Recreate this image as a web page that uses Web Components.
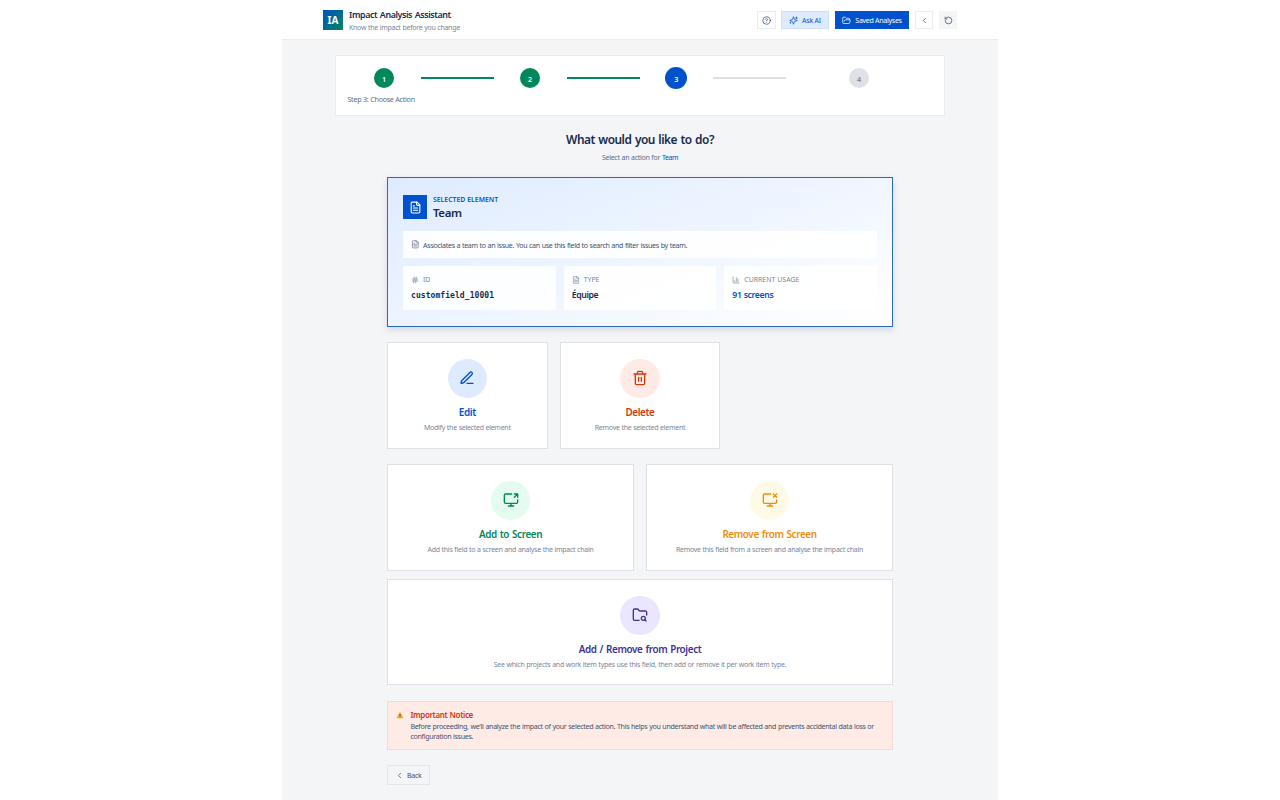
<!DOCTYPE html>
<html lang="en">
<head>
    <meta charset="UTF-8">
    <meta name="viewport" content="width=device-width, initial-scale=1.0">
    <title>Impact Analysis Assistant</title>
    <style>
        body {
            margin: 0;
            background: #fff;
            color: #172b4d;
            font-family: "Noto Sans", "Open Sans", sans-serif;
            font-size: 7px;
            line-height: 10px;
            letter-spacing: -0.27px;
            word-spacing: 0.25px;
        }

        .team { color: #0052cc; letter-spacing: -0.4px; }
    </style>
</head>
<body>
    <impact-app>
        <app-header slot="header"></app-header>
        <step-progress current="3" total="4" label="Step 3: Choose Action"></step-progress>
        <page-title heading="What would you like to do?">Select an action for <span class="team">Team</span></page-title>
        <selected-element name="Team"></selected-element>

        <action-row columns="3">
            <action-card icon="pen" heading="Edit" color="#0052cc" tint="#deebff">Modify the selected element</action-card>
            <action-card icon="trash" heading="Delete" color="#d4380d" tint="#ffebe6">Remove the selected element</action-card>
        </action-row>
        <action-row columns="2">
            <action-card icon="screen-add" heading="Add to Screen" color="#00875a" tint="#e3fcef">Add this field to a screen and analyse the impact chain</action-card>
            <action-card icon="screen-remove" heading="Remove from Screen" color="#f08c0a" tint="#fffae6">Remove this field from a screen and analyse the impact chain</action-card>
        </action-row>
        <action-row columns="1">
            <action-card icon="folder-search" heading="Add / Remove from Project" color="#403294" tint="#eae6ff">See which projects and work item types use this field, then add or remove it per work item type.</action-card>
        </action-row>

        <notice-box heading="Important Notice">Before proceeding, we'll analyze the impact of your selected action. This helps you understand what will be affected and prevents accidental data loss or<br>configuration issues.</notice-box>
        <back-button>Back</back-button>
    </impact-app>

    <script>
        const ICONS = {
            help: '<circle cx="12" cy="12" r="10"/><path d="M9.09 9a3 3 0 0 1 5.83 1c0 2-3 3-3 3"/><path d="M12 17h.01"/>',
            sparkles: '<path d="M9.94 15.5A2 2 0 0 0 8.5 14.06l-6.14-1.58a.5.5 0 0 1 0-.96L8.5 9.94A2 2 0 0 0 9.94 8.5l1.58-6.14a.5.5 0 0 1 .96 0l1.58 6.14a2 2 0 0 0 1.44 1.44l6.14 1.58a.5.5 0 0 1 0 .96l-6.14 1.58a2 2 0 0 0-1.44 1.44l-1.58 6.14a.5.5 0 0 1-.96 0z"/><path d="M20 3v4M22 5h-4M4 17v2M5 18H3"/>',
            'folder-open': '<path d="m6 14 1.5-2.9A2 2 0 0 1 9.24 10H20a2 2 0 0 1 1.94 2.5l-1.54 6a2 2 0 0 1-1.95 1.5H4a2 2 0 0 1-2-2V5a2 2 0 0 1 2-2h3.9a2 2 0 0 1 1.69.9l.81 1.2a2 2 0 0 0 1.67.9H18a2 2 0 0 1 2 2v2"/>',
            back: '<path d="m15 18-6-6 6-6"/>',
            reset: '<path d="M3 12a9 9 0 1 0 9-9 9.75 9.75 0 0 0-6.74 2.74L3 8"/><path d="M3 3v5h5"/>',
            file: '<path d="M15 2H6a2 2 0 0 0-2 2v16a2 2 0 0 0 2 2h12a2 2 0 0 0 2-2V7Z"/><path d="M14 2v4a2 2 0 0 0 2 2h4M10 9H8M16 13H8M16 17H8"/>',
            hash: '<path d="M4 9h16M4 15h16M10 3 8 21M16 3l-2 18"/>',
            chart: '<path d="M3 3v16a2 2 0 0 0 2 2h16M18 17V9M13 17V5M8 17v-3"/>',
            pen: '<path d="M12 20h9"/><path d="M16.38 3.62a1 1 0 0 1 3 3L7.37 18.64a2 2 0 0 1-.86.5l-2.87.84a.5.5 0 0 1-.62-.62l.84-2.87a2 2 0 0 1 .5-.86z"/>',
            trash: '<path d="M3 6h18M19 6v14a2 2 0 0 1-2 2H7a2 2 0 0 1-2-2V6M8 6V4a2 2 0 0 1 2-2h4a2 2 0 0 1 2 2v2M10 11v6M14 11v6"/>',
            'screen-add': '<path d="M13 3H4a2 2 0 0 0-2 2v10a2 2 0 0 0 2 2h16a2 2 0 0 0 2-2v-3M8 21h8M12 17v4M17 8l5-5M17 3h5v5"/>',
            'screen-remove': '<path d="M13 3H4a2 2 0 0 0-2 2v10a2 2 0 0 0 2 2h16a2 2 0 0 0 2-2v-3M8 21h8M12 17v4M22 3l-5 5M17 3l5 5"/>',
            'folder-search': '<path d="M10.7 20H4a2 2 0 0 1-2-2V5a2 2 0 0 1 2-2h3.9a2 2 0 0 1 1.69.9l.81 1.2a2 2 0 0 0 1.67.9H20a2 2 0 0 1 2 2v4.1M21 21l-1.9-1.9"/><circle cx="17" cy="17" r="3"/>'
        };

        // Shared base: every element renders its template() once it is attached
        class BaseElement extends HTMLElement {
            connectedCallback() {
                if (!this.shadowRoot) {
                    this.attachShadow({mode: 'open'});
                }
                this.shadowRoot.innerHTML = this.template();
            }
        }

        class UiIcon extends BaseElement {
            template() {
                const size = this.getAttribute('size') || 9;
                return `
                    <style>
                        :host { display: inline-flex; flex: none; }
                        svg { display: block; fill: none; stroke: currentColor; stroke-width: 2; stroke-linecap: round; stroke-linejoin: round; }
                    </style>
                    <svg width="${size}" height="${size}" viewBox="0 0 24 24">${ICONS[this.getAttribute('name')]}</svg>`;
            }
        }

        class ImpactApp extends BaseElement {
            template() {
                return `
                    <style>
                        :host { display: block; box-sizing: border-box; width: 716px; height: 800px; margin: 0 auto; background: #f4f5f7; overflow: hidden; }
                        main { display: flex; flex-direction: column; padding: 15px 53px 0; }
                    </style>
                    <slot name="header"></slot>
                    <main><slot></slot></main>`;
            }
        }

        class AppHeader extends BaseElement {
            template() {
                return `
                    <style>
                        :host { display: flex; align-items: center; box-sizing: border-box; height: 40px; padding: 1px 41px 0; background: #fff; border-bottom: 1px solid #ebecf0; }
                        .logo { display: grid; place-items: center; width: 20px; height: 20px; margin: 0 6px 0 0; background: linear-gradient(135deg, #0052cc, #00875a); color: #fff; font-size: 10px; font-weight: 700; letter-spacing: 0; }
                        .title { padding-top: 1px; font-size: 8.9px; font-weight: 600; line-height: 12px; letter-spacing: -0.4px; word-spacing: 0.7px; }
                        .sub { color: #7a869a; margin-top: 2px; }
                        nav { display: flex; margin-left: auto; }
                        button { display: flex; align-items: center; justify-content: center; box-sizing: border-box; height: 18px; margin: 0; padding: 0; border: 1px solid #ebecf0; background: #fff; color: #42526e; font: inherit; letter-spacing: inherit; }
                        span { padding-top: 1px; }
                        .ai { width: 48px; gap: 4px; margin: 0 6px 0 5px; background: #deebff; border-color: #cfe0f8; color: #0052cc; letter-spacing: -0.2px; }
                        .saved { width: 74px; gap: 4px; background: #0052cc; border-color: #0052cc; color: #fff; }
                        .reset { background: #f4f5f7; border-color: #f4f5f7; }
                    </style>
                    <div class="logo">IA</div>
                    <div>
                        <div class="title">Impact Analysis Assistant</div>
                        <div class="sub">Know the impact before you change</div>
                    </div>
                    <nav>
                        <button style="width: 19px"><ui-icon name="help"></ui-icon></button>
                        <button class="ai"><ui-icon name="sparkles"></ui-icon><span>Ask AI</span></button>
                        <button class="saved"><ui-icon name="folder-open"></ui-icon><span>Saved Analyses</span></button>
                        <button style="width: 18px; margin: 0 6px"><ui-icon name="back" size="9"></ui-icon></button>
                        <button class="reset" style="width: 18px"><ui-icon name="reset"></ui-icon></button>
                    </nav>`;
            }
        }

        class StepProgress extends BaseElement {
            template() {
                const current = Number(this.getAttribute('current'));
                const total = Number(this.getAttribute('total'));
                let steps = '';
                for (let i = 1; i <= total; i++) {
                    const state = i < current ? 'done' : i === current ? 'current' : '';
                    const line = i < total ? '<i></i>' : '';
                    steps += `<div class="step ${state}"><div class="cell"><b>${i}</b></div>${line}</div>`;
                }
                return `
                    <style>
                        :host { display: block; box-sizing: border-box; height: 61px; padding: 11px 12px 0 11.5px; background: #fff; border: 1px solid #ebecf0; }
                        .steps { display: flex; height: 22px; }
                        .step { display: flex; flex: 1; align-items: center; }
                        .cell { display: flex; flex: 1; justify-content: center; }
                        b { display: grid; place-items: center; box-sizing: border-box; width: 20px; height: 20px; padding-top: 1px; border-radius: 50%; background: #dfe1e6; color: #7a869a; font-size: 7.2px; font-weight: 600; letter-spacing: 0; }
                        i { flex: 1; height: 2px; background: #dfe1e6; }
                        .done b, .done i { background: #00875a; color: #fff; }
                        .current b { width: 22px; height: 22px; background: #0052cc; color: #fff; }
                        .label { margin-top: 5px; color: #5e6c84; font-size: 7.1px; }
                    </style>
                    <div class="steps">${steps}</div>
                    <div class="label">${this.getAttribute('label')}</div>`;
            }
        }

        class PageTitle extends BaseElement {
            template() {
                return `
                    <style>
                        :host { display: block; margin: 15px 0 14px; text-align: center; color: #5e6c84; }
                        h1 { margin: 0 0 6px; color: #172b4d; font-size: 11.9px; font-weight: 600; line-height: 16px; letter-spacing: -0.48px; word-spacing: 0.8px; }
                    </style>
                    <h1>${this.getAttribute('heading')}</h1>
                    <slot></slot>`;
            }
        }

        class SelectedElement extends BaseElement {
            template() {
                return `
                    <style>
                        :host { display: block; box-sizing: border-box; width: 506px; height: 150px; margin: 0 auto 15px; padding: 17px 15px 0; border: 1px solid #2a69bd; background: linear-gradient(160deg, #deebff, #fff); box-shadow: 0 3px 7px rgba(9, 30, 66, 0.13); }
                        .head { display: flex; gap: 6px; height: 24px; }
                        .badge { display: grid; place-items: center; width: 24px; height: 24px; background: #0052cc; color: #fff; }
                        .over { color: #0052cc; font-size: 6.8px; font-weight: 600; letter-spacing: 0.03px; line-height: 9px; }
                        .name { font-size: 11.5px; font-weight: 600; line-height: 17px; letter-spacing: -0.42px; }
                        .box { box-sizing: border-box; background: rgba(255, 255, 255, 0.88); padding: 8px; }
                        .desc { display: flex; align-items: center; gap: 3.5px; height: 27px; margin: 12px 0 8px; color: #42526e; font-size: 7.1px; letter-spacing: -0.318px; }
                        .desc ui-icon { color: #6b778c; }
                        .stats { display: grid; grid-template-columns: repeat(3, 1fr); gap: 8px; }
                        .stats .box { height: 44px; }
                        .key { display: flex; align-items: center; gap: 4px; padding-top: 1px; color: #7a869a; font-size: 6.9px; letter-spacing: 0.01px; }
                        .val { margin-top: 4px; font-size: 8.7px; font-weight: 600; line-height: 12px; letter-spacing: -0.36px; }
                        .mono { margin-top: 5px; font-family: "DejaVu Sans Mono", "Liberation Mono", monospace; font-size: 8px; font-weight: 700; letter-spacing: 0.07px; }
                    </style>
                    <div class="head">
                        <div class="badge"><ui-icon name="file" size="13"></ui-icon></div>
                        <div>
                            <div class="over">SELECTED ELEMENT</div>
                            <div class="name">${this.getAttribute('name')}</div>
                        </div>
                    </div>
                    <div class="box desc"><ui-icon name="file" size="8.6"></ui-icon><span>Associates a team to an issue. You can use this field to search and filter issues by team.</span></div>
                    <div class="stats">
                        <div class="box">
                            <div class="key"><ui-icon name="hash" size="8"></ui-icon>ID</div>
                            <div class="val mono">customfield_10001</div>
                        </div>
                        <div class="box">
                            <div class="key"><ui-icon name="file" size="8"></ui-icon>TYPE</div>
                            <div class="val">Équipe</div>
                        </div>
                        <div class="box">
                            <div class="key"><ui-icon name="chart" size="8"></ui-icon>CURRENT USAGE</div>
                            <div class="val" style="color: #0052cc">91 screens</div>
                        </div>
                    </div>`;
            }
        }

        class ActionRow extends BaseElement {
            template() {
                return `
                    <style>
                        :host { display: grid; grid-template-columns: repeat(${this.getAttribute('columns')}, 1fr); gap: 12px; width: 506px; margin: 0 auto; }
                        :host([columns="3"]) { margin-bottom: 15px; }
                        :host([columns="1"]) { margin-top: 8px; }
                    </style>
                    <slot></slot>`;
            }
        }

        class ActionCard extends BaseElement {
            template() {
                return `
                    <style>
                        :host { display: flex; flex-direction: column; align-items: center; box-sizing: border-box; height: 107px; padding-top: 15.5px; background: #fff; border: 1px solid #dfe1e6; color: #7a869a; }
                        :host([icon="folder-search"]) { height: 106px; }
                        .icon { display: grid; place-items: center; width: 39.5px; height: 39.5px; border-radius: 50%; background: ${this.getAttribute('tint')}; }
                        .icon, h2 { color: ${this.getAttribute('color')}; }
                        h2 { margin: 8px 0 3.5px; font-size: 9.9px; font-weight: 600; line-height: 13px; letter-spacing: -0.38px; word-spacing: 0.8px; }
                    </style>
                    <div class="icon"><ui-icon name="${this.getAttribute('icon')}" size="16"></ui-icon></div>
                    <h2>${this.getAttribute('heading')}</h2>
                    <div><slot></slot></div>`;
            }
        }

        class NoticeBox extends BaseElement {
            template() {
                return `
                    <style>
                        :host { display: flex; gap: 6px; box-sizing: border-box; width: 506px; height: 49px; margin: 16px auto 15px; padding: 7px 8.4px; background: #ffebe6; border: 1px solid #f9d9d1; color: #42526e; }
                        svg { flex: none; margin: 2px 0 0; }
                        h3 { margin: 0; color: #d4380d; font-size: 8px; font-weight: 600; line-height: 12px; letter-spacing: -0.37px; word-spacing: 0.5px; }
                        .text { white-space: nowrap; font-size: 7.1px; letter-spacing: -0.314px; }
                    </style>
                    <svg width="8" height="8" viewBox="0 0 16 16">
                        <path d="M8 3 14 13.5H2z" fill="#f5a623" stroke="#f5a623" stroke-width="1.5" stroke-linejoin="round"/>
                        <path d="M8 6v4M8 11.5v1.5" stroke="#5d4037" stroke-width="1.8"/>
                    </svg>
                    <div>
                        <h3>${this.getAttribute('heading')}</h3>
                        <div class="text"><slot></slot></div>
                    </div>`;
            }
        }

        class BackButton extends BaseElement {
            template() {
                return `
                    <style>
                        :host { display: flex; width: 506px; margin: 0 auto; }
                        button { display: flex; align-items: center; gap: 3px; box-sizing: border-box; width: 43px; height: 20px; margin: 0; padding: 1px 0 0 7px; background: transparent; border: 1px solid #e4e6eb; color: #42526e; font: inherit; letter-spacing: -0.3px; }
                    </style>
                    <button><ui-icon name="back" size="9"></ui-icon><span><slot></slot></span></button>`;
            }
        }

        customElements.define('ui-icon', UiIcon);
        customElements.define('impact-app', ImpactApp);
        customElements.define('app-header', AppHeader);
        customElements.define('step-progress', StepProgress);
        customElements.define('page-title', PageTitle);
        customElements.define('selected-element', SelectedElement);
        customElements.define('action-row', ActionRow);
        customElements.define('action-card', ActionCard);
        customElements.define('notice-box', NoticeBox);
        customElements.define('back-button', BackButton);
    </script>
</body>
</html>
